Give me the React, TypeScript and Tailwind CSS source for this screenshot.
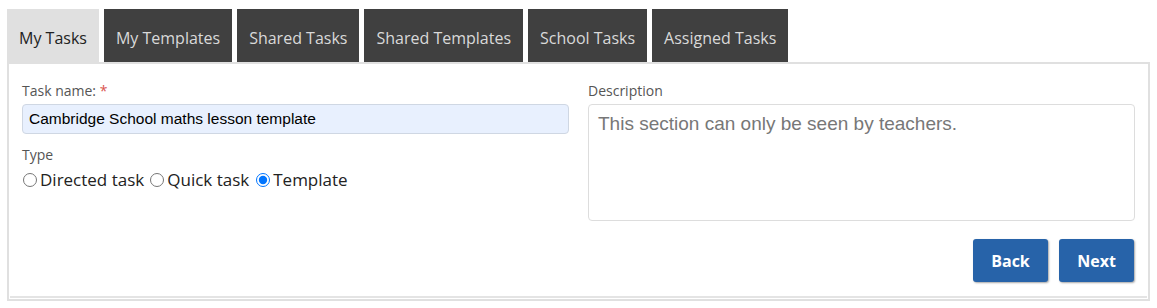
import React from "react";

const tabs = ["My Templates", "Shared Tasks", "Shared Templates", "School Tasks", "Assigned Tasks"];

export default function App() {
  return (
    <div className="w-[1157px] h-[308px] bg-white px-[7px] pt-[9px] font-['Open_Sans',sans-serif]">
      <div className="flex gap-[5px]">
        <div className="h-[53px] px-[12px] pt-[17px] text-[16px] leading-[24px] bg-[#e0e0e0] text-[#222]">My Tasks</div>
        {tabs.map((t) => (
          <div key={t} className="h-[53px] px-[12px] pt-[17px] text-[16px] leading-[24px] bg-[#404040] text-[#d9d9d9]">
            {t}
          </div>
        ))}
      </div>
      <div className="border-2 border-[#e0e0e0]">
        <div className="mx-px mb-px border-b-2 border-[#e4e4e4] px-[12px] pt-[18px] pb-[14px]">
          <div className="grid grid-cols-2 gap-x-[19px]">
            <div className="flex flex-col">
              <div className="text-[14px] leading-[18px] text-[#555]">
                Task name: <span className="text-[#d9534f]">*</span>
              </div>
              <input
                readOnly
                value="Cambridge School maths lesson template"
                className="mt-[4px] h-[30px] rounded-[4px] border border-[#cfd7e3] bg-[#e8f0fe] px-[6px] text-[15.5px] text-black font-['Liberation_Sans',Arial,sans-serif] outline-none"
              />
              <div className="mt-[12px] text-[14px] leading-[18px] text-[#555]">Type</div>
              <div className="mt-[4px] flex items-center text-[17px] leading-[24px] text-[#222]">
                <label className="flex items-center">
                  <input type="radio" name="type" readOnly className="m-0 ml-[1px] mr-[3px] h-[14px] w-[14px]" />
                  <span>Directed task</span>
                </label>
                <label className="ml-[6px] flex items-center">
                  <input type="radio" name="type" readOnly className="m-0 mr-[3px] h-[14px] w-[14px]" />
                  <span>Quick task</span>
                </label>
                <label className="ml-[7px] flex items-center">
                  <input type="radio" name="type" defaultChecked className="m-0 mr-[3px] h-[14px] w-[14px]" />
                  <span>Template</span>
                </label>
              </div>
            </div>
            <div className="flex flex-col">
              <div className="text-[14px] leading-[18px] text-[#555]">Description</div>
              <textarea
                readOnly
                placeholder="This section can only be seen by teachers."
                className="mt-[4px] h-[117px] resize-none rounded-[4px] border border-[#dddddd] px-[9px] py-[8px] text-[19px] leading-[22px] font-['Liberation_Sans',Arial,sans-serif] placeholder:text-[#777] outline-none"
              />
            </div>
          </div>
          <div className="mt-[18px] mr-px flex justify-end gap-[11px]">
            <button className="h-[43px] w-[75px] rounded-[3px] bg-[#2763a9] text-[16px] font-bold text-white shadow-[1px_1px_2px_rgba(0,0,0,0.35)]">
              Back
            </button>
            <button className="h-[43px] w-[75px] rounded-[3px] bg-[#2763a9] text-[16px] font-bold text-white shadow-[1px_1px_2px_rgba(0,0,0,0.35)]">
              Next
            </button>
          </div>
        </div>
      </div>
    </div>
  );
}
